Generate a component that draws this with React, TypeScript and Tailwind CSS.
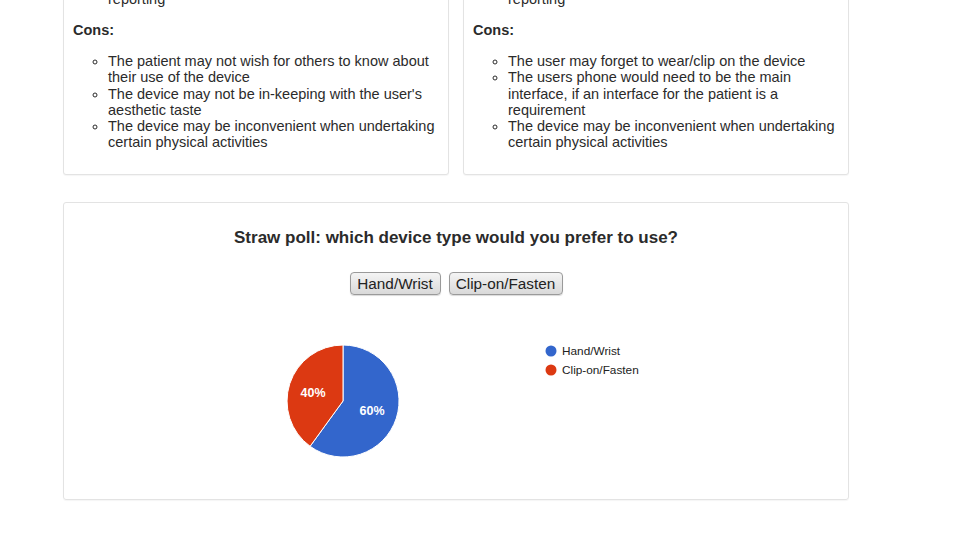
export default function App() {
  const cons1 = [
    'The patient may not wish for others to know about their use of the device',
    "The device may not be in-keeping with the user's aesthetic taste",
    'The device may be inconvenient when undertaking certain physical activities',
  ];
  const cons2 = [
    'The user may forget to wear/clip on the device',
    'The users phone would need to be the main interface, if an interface for the patient is a requirement',
    'The device may be inconvenient when undertaking certain physical activities',
  ];

  const Card = ({ items }: { items: string[] }) => (
    <div className="border border-[#e3e3e3] rounded-[3px] shadow-[0_1px_1px_rgba(0,0,0,0.04)] px-[9px] pt-[10px] pb-[24px] bg-white">
      <div className="pl-[35px] leading-[16.2px]">reporting</div>
      <div className="mt-[15px] font-bold leading-[16px]">Cons:</div>
      <ul className="mt-[15px] pl-[35px] list-[circle] leading-[16.2px]">
        {items.map((t, i) => (
          <li key={i}>{t}</li>
        ))}
      </ul>
    </div>
  );

  return (
    <div
      className="w-[960px] h-[540px] overflow-hidden bg-white text-[14.5px] text-[#2b2b2b]"
      style={{ fontFamily: '"Liberation Sans", Arial, sans-serif' }}
    >
      <div className="ml-[63px] w-[786px] -mt-[20px]">
        <div className="grid grid-cols-2 gap-[14px]">
          <Card items={cons1} />
          <Card items={cons2} />
        </div>

        <div className="mt-[27px] border border-[#e3e3e3] rounded-[3px] shadow-[0_1px_1px_rgba(0,0,0,0.04)] pt-[25px] flex flex-col items-center">
          <h3 className="text-[17px] font-bold leading-[20px] text-[#2b2b2b]">
            Straw poll: which device type would you prefer to use?
          </h3>
          <div className="mt-[24px] flex gap-[8px]">
            <button className="h-[23px] w-[91px] rounded-[4px] border border-[#9a9a9a] bg-gradient-to-b from-[#f4f4f4] to-[#d9d9d9] text-[15.3px] text-[#222] shadow-[0_1px_1px_rgba(0,0,0,0.15)]">
              Hand/Wrist
            </button>
            <button className="h-[23px] w-[114px] rounded-[4px] border border-[#9a9a9a] bg-gradient-to-b from-[#f4f4f4] to-[#d9d9d9] text-[15.3px] text-[#222] shadow-[0_1px_1px_rgba(0,0,0,0.15)]">
              Clip-on/Fasten
            </button>
          </div>
          <svg className="mt-[6px]" width="400" height="198" viewBox="0 0 400 198">
            <path d="M87,100 L87,44 A56,56 0 1 1 54.1,145.3 Z" fill="#3366cc" stroke="#fff" strokeWidth="1" />
            <path d="M87,100 L54.1,145.3 A56,56 0 0 1 87,44 Z" fill="#dc3912" stroke="#fff" strokeWidth="1" />
            <text x="116" y="114" fill="#fff" fontSize="12.5" fontWeight="bold" textAnchor="middle" fontFamily="Liberation Sans, Arial, sans-serif">60%</text>
            <text x="57" y="96" fill="#fff" fontSize="12.5" fontWeight="bold" textAnchor="middle" fontFamily="Liberation Sans, Arial, sans-serif">40%</text>
            <circle cx="295" cy="50" r="5.5" fill="#3366cc" />
            <text x="306" y="54" fill="#222" fontSize="11.8" fontFamily="Liberation Sans, Arial, sans-serif">Hand/Wrist</text>
            <circle cx="295" cy="69" r="5.5" fill="#dc3912" />
            <text x="306" y="73" fill="#222" fontSize="11.8" fontFamily="Liberation Sans, Arial, sans-serif">Clip-on/Fasten</text>
          </svg>
        </div>
      </div>
    </div>
  );
}
